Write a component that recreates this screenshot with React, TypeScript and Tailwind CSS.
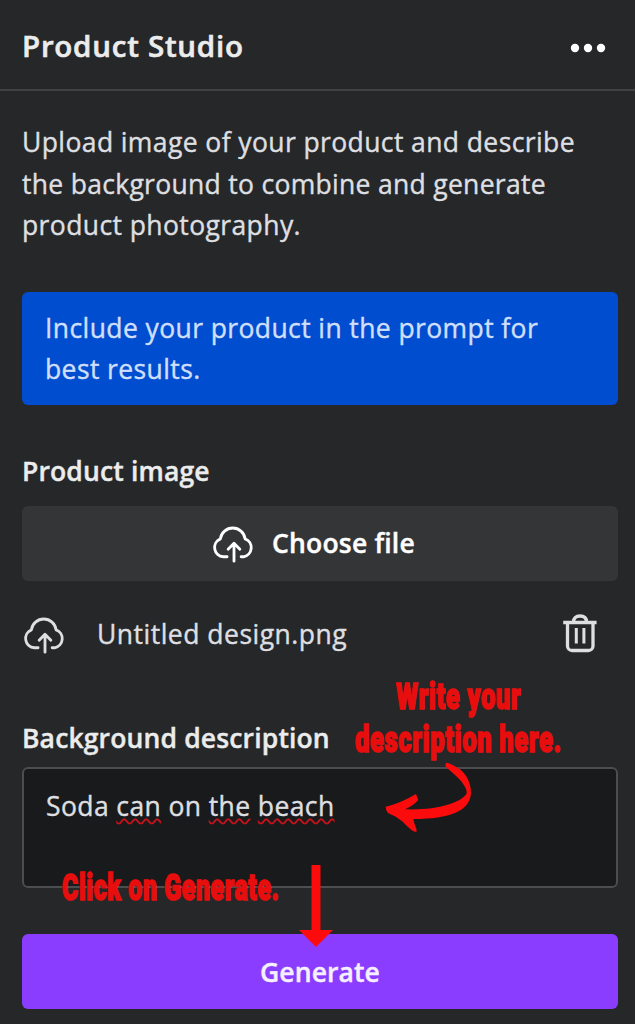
function CloudUpload({ className }: { className: string }) {
  return (
    <svg className={className} viewBox="0 0 42 38" fill="none" stroke="currentColor" strokeWidth="2.7" strokeLinecap="round" strokeLinejoin="round">
      <path d="M14.400 31.200h-3.600a8.900 8.900 0 0 1-2.800-17.100a11.900 11.900 0 0 1 23.600 0a8.900 8.900 0 0 1-1.400 17.100h-2.400" />
      <path d="M21 35.400V18.600M15.400 24l5.600-5.800l5.600 5.800" />
    </svg>
  );
}

function Trash({ className }: { className: string }) {
  return (
    <svg className={className} viewBox="0 0 36 40" fill="none" stroke="currentColor" strokeWidth="3.3">
      <path d="M1.200 9.500h33.400M11.500 9C11.500 5 14 3 18 3s6.500 2 6.500 6" />
      <path d="M5.500 9.500v23.500a4.500 4.500 0 0 0 4.500 4.500h16.500a4.500 4.500 0 0 0 4.500-4.500V9.500" />
      <path d="M14.300 15v15.500M21.900 15v15.500" strokeWidth="3" />
    </svg>
  );
}

function Misspelled({ children }: { children: string }) {
  return (
    <span className="underline decoration-[#c4121a] decoration-wavy decoration-[2px] underline-offset-[2px]">
      {children}
    </span>
  );
}

function Note({ className, children }: { className: string; children: string }) {
  return (
    <div
      className={`absolute origin-left font-['Roboto',sans-serif] text-[37px] leading-10 font-black tracking-[1px] whitespace-nowrap text-[#e80e0e] [-webkit-text-stroke:1.6px_#e80e0e] ${className}`}
    >
      {children}
    </div>
  );
}

const heading = "h-10 leading-10 font-semibold tracking-[0.15px] text-[#ececec] [-webkit-text-stroke:0.4px_currentColor]";

export default function App() {
  return (
    <div className="relative flex h-[1024px] w-[635px] flex-col overflow-hidden bg-[#252729] font-['Open_Sans',sans-serif] text-[26.5px] font-medium tracking-[0.4px] text-[#dedfe0] [-webkit-text-stroke:0.4px_currentColor]">
      <header className="flex h-[91px] shrink-0 items-center justify-between border-b-2 border-[#404143] pt-[3px] pr-[29px] pl-[22px]">
        <h1 className="text-[29.500px] font-semibold tracking-[0.750px] text-[#ececec] [-webkit-text-stroke:0.6px_currentColor]">Product Studio</h1>
        <svg className="mt-[3px] h-3 w-9 text-white" viewBox="0 0 36 12" fill="currentColor">
          <circle cx="5" cy="6" r="4.200" />
          <circle cx="18" cy="6" r="4.200" />
          <circle cx="31" cy="6" r="4.200" />
        </svg>
      </header>
      <main className="flex flex-col pt-[31px] pr-[17px] pl-[22px]">
        <p className="leading-[41.500px] whitespace-nowrap">
          Upload image of your product and describe
          <br />
          <span className="tracking-[0.3px]">the background to combine and generate</span>
          <br />
          product photography.
        </p>
        <div className="mt-[45px] h-[113px] rounded-[6px] bg-[#004dcf] px-[23px] pt-[16px] leading-[41px] whitespace-nowrap text-[#d0dffb]">
          Include your product in the prompt for
          <br />
          best results.
        </div>
        <h2 className={`mt-[46px] ${heading}`}>Product image</h2>
        <button className="mt-[15px] flex h-[75px] items-center justify-center gap-[16px] rounded-[6px] bg-[#343537] pt-[2px] pr-[13px] font-semibold tracking-[0.2px] text-white">
          <CloudUpload className="h-[40px] w-[44px]" />
          <span>Choose file</span>
        </button>
        <div className="mt-[34px] flex h-10 items-center pr-[20px]">
          <CloudUpload className="ml-[1px] h-[40px] w-[44px]" />
          <span className="ml-[30px] tracking-[0.5px]">Untitled design.png</span>
          <Trash className="mb-[3px] ml-auto h-10 w-9" />
        </div>
        <h2 className={`mt-[63px] ${heading}`}>Background description</h2>
        <div className="mt-[9px] h-[121px] rounded-[6px] border-2 border-[#4b4d4f] bg-[#191a1b] px-[22px] pt-[17px] leading-10">
          Soda <Misspelled>can</Misspelled> on <Misspelled>the</Misspelled> <Misspelled>beach</Misspelled>
        </div>
        <button className="mt-[46px] h-[75px] rounded-[6px] bg-[#8b3dff] pt-[3px] font-semibold tracking-[0.1px] text-[#f6efff]">Generate</button>
      </main>
      <Note className="top-[677px] left-[396px] scale-x-[0.685]">Write your</Note>
      <Note className="top-[720px] left-[355px] scale-x-[0.687]">description here.</Note>
      <Note className="top-[868px] left-[62px] scale-x-[0.668]">Click on Generate.</Note>
      <svg className="absolute top-[762px] left-[384px] h-[72px] w-[90px] text-[#fb0b0b]" viewBox="0 0 90 72" fill="currentColor">
        <path d="M62.700 .7Q66 1 74.300 6.300C80 10 87 18 87 31C86 49 66 57 29.500 57Q29.500 60 32.500 67V70Q28 70 19 60Q12 54 4 51Q1.700 49 1.700 44.700Q17 41 32 32L34.300 38Q29 44 21 47.300C53 48.500 76 41 82.500 32C84 28 79 20 71 13L62 5Q60.500 2 62.700 .7Z" />
      </svg>
      <svg className="absolute top-[865px] left-[299px] h-[83px] w-[34px] text-[#fb0b0b]" viewBox="0 0 34 83" fill="currentColor">
        <path d="M12.500 0h9v65h12.500L17 82L0 65h12.500z" />
      </svg>
    </div>
  );
}
